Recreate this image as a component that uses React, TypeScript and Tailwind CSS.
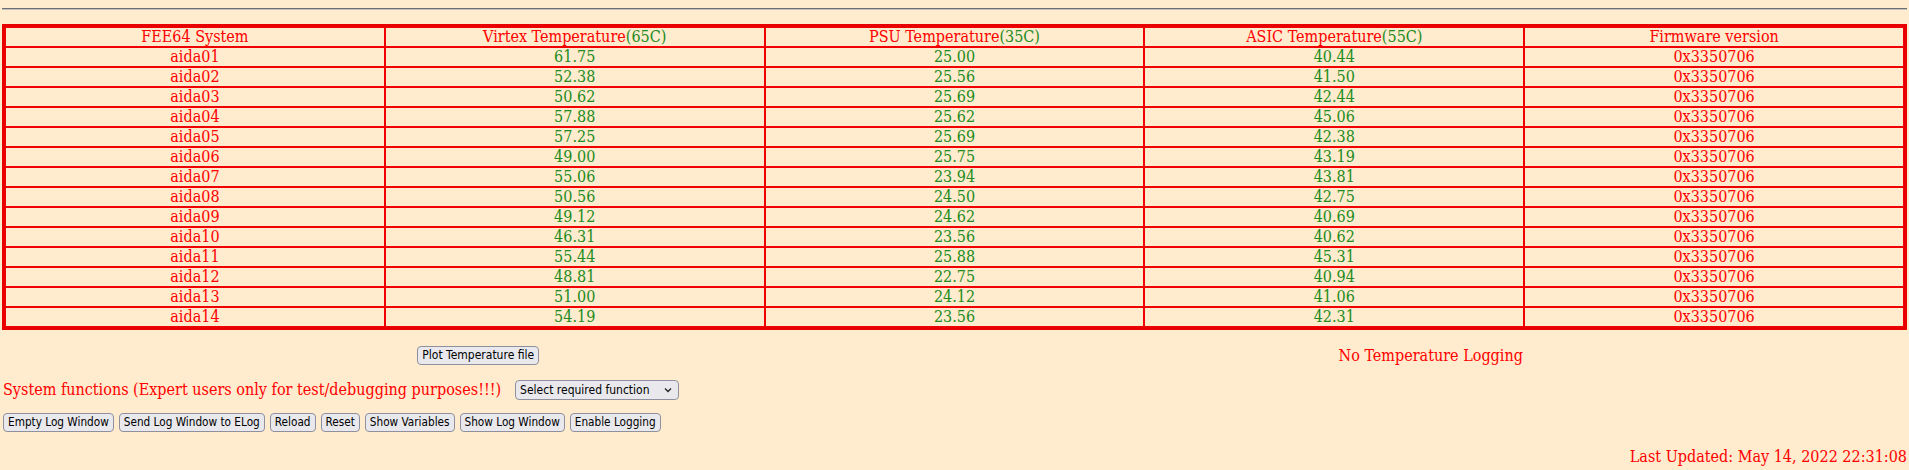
import React from "react";

const rows: [string, string, string, string][] = [
  ["aida01", "61.75", "25.00", "40.44"],
  ["aida02", "52.38", "25.56", "41.50"],
  ["aida03", "50.62", "25.69", "42.44"],
  ["aida04", "57.88", "25.62", "45.06"],
  ["aida05", "57.25", "25.69", "42.38"],
  ["aida06", "49.00", "25.75", "43.19"],
  ["aida07", "55.06", "23.94", "43.81"],
  ["aida08", "50.56", "24.50", "42.75"],
  ["aida09", "49.12", "24.62", "40.69"],
  ["aida10", "46.31", "23.56", "40.62"],
  ["aida11", "55.44", "25.88", "45.31"],
  ["aida12", "48.81", "22.75", "40.94"],
  ["aida13", "51.00", "24.12", "41.06"],
  ["aida14", "54.19", "23.56", "42.31"],
];

const td = "border border-[#f00000] p-0 h-[20px] leading-[18px] text-center align-middle";
const btn =
  "bg-[#e9e9ed] border border-[#8f8f9d] rounded-[4px] px-[4px] h-[19px] text-[11.7px] leading-[17px] text-black font-['DejaVu_Sans_Condensed','DejaVu_Sans',sans-serif] [font-stretch:condensed] whitespace-nowrap";

export default function App() {
  return (
    <div className="min-h-screen bg-[#ffebcd] font-['DejaVu_Serif_Condensed','DejaVu_Serif',serif] [font-stretch:condensed] text-[16px] text-[#ff0000] px-[2px] pt-[8px]">
      <div className="h-[2px] border-t border-t-[#6e6e6e] border-b border-b-[#c0c0c0]" />
      <table className="mt-[14px] w-full border-separate border-spacing-0 border-[3px] border-[#e80000] table-fixed">
        <tbody>
          <tr>
            <td className={td}>FEE64 System</td>
            <td className={td}>
              Virtex Temperature<span className="text-[#228b22]">(65C)</span>
            </td>
            <td className={td}>
              PSU Temperature<span className="text-[#228b22]">(35C)</span>
            </td>
            <td className={td}>
              ASIC Temperature<span className="text-[#228b22]">(55C)</span>
            </td>
            <td className={td}>Firmware version</td>
          </tr>
          {rows.map((r) => (
            <tr key={r[0]}>
              <td className={td}>{r[0]}</td>
              <td className={td + " text-[#228b22]"}>{r[1]}</td>
              <td className={td + " text-[#228b22]"}>{r[2]}</td>
              <td className={td + " text-[#228b22]"}>{r[3]}</td>
              <td className={td}>0x3350706</td>
            </tr>
          ))}
        </tbody>
      </table>

      <div className="flex mt-[16px] items-center">
        <div className="flex-1 flex justify-center">
          <button className={btn + " text-[12px]"}>Plot Temperature file</button>
        </div>
        <div className="flex-1 flex justify-center leading-[18px]">No Temperature Logging</div>
      </div>

      <div className="flex items-center mt-[15px] gap-[14px] pl-[1px]">
        <span className="leading-[18px]">System functions (Expert users only for test/debugging purposes!!!)</span>
        <div className="relative w-[164px] h-[20px] bg-[#e9e9ed] border border-[#8f8f9d] rounded-[4px] text-black text-[12px] leading-[18px] font-['DejaVu_Sans_Condensed','DejaVu_Sans',sans-serif] [font-stretch:condensed] pl-[4px]">
          Select required function
          <svg className="absolute right-[6px] top-[6px]" width="8" height="6" viewBox="0 0 8 6">
            <path d="M1 1.5 L4 4.5 L7 1.5" stroke="#222" strokeWidth="1.3" fill="none" />
          </svg>
        </div>
      </div>

      <div className="flex items-center gap-[5px] mt-[13px] pl-[1px]">
        <button className={btn}>Empty Log Window</button>
        <button className={btn}>Send Log Window to ELog</button>
        <button className={btn}>Reload</button>
        <button className={btn}>Reset</button>
        <button className={btn}>Show Variables</button>
        <button className={btn}>Show Log Window</button>
        <button className={btn}>Enable Logging</button>
      </div>

      <div className="text-right mt-[16px] leading-[18px]">Last Updated: May 14, 2022 22:31:08</div>
    </div>
  );
}
